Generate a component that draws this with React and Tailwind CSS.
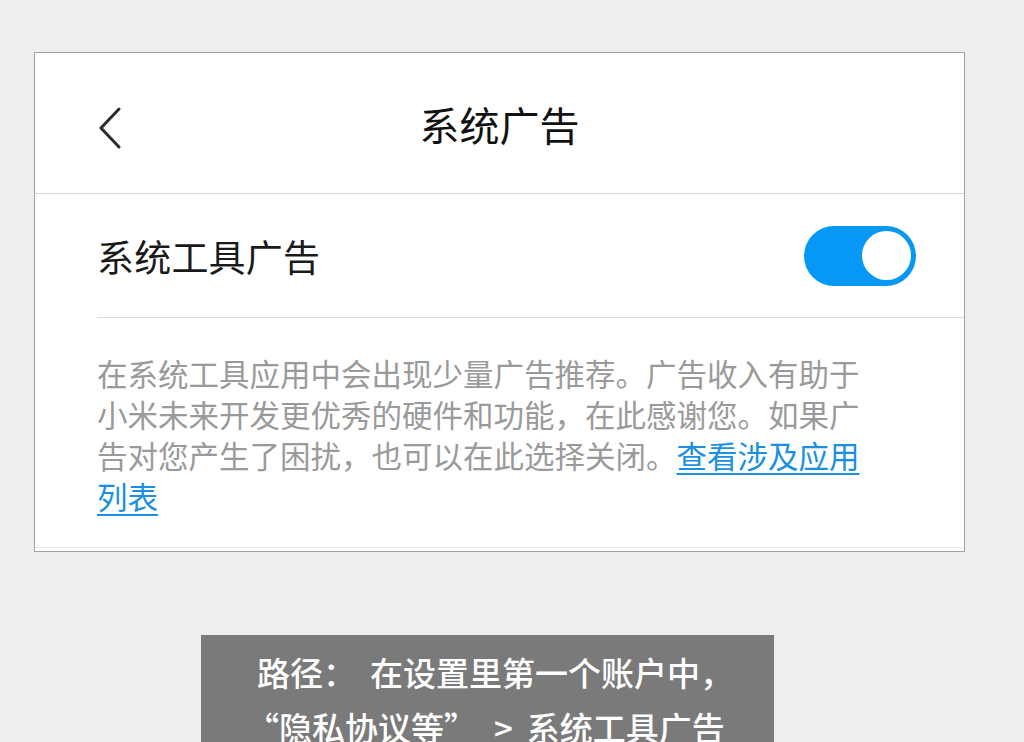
import React, { useState } from "react";

const font = { fontFamily: '"Noto Sans CJK SC", "Noto Sans", sans-serif' };

const App = () => {
  const [on, setOn] = useState(true);

  return (
    <div className="w-[1024px] h-[742px] overflow-hidden bg-[#eeeeee]" style={font}>
      <div className="pt-[52px] pl-[34px]">
        <div className="w-[931px] bg-white border border-[#a3a3a3]">
          {/* header */}
          <div className="relative h-[141px] flex items-center justify-center border-b border-[#d4d4d4]">
            <button className="absolute left-[62px] top-[54px] w-[28px] h-[42px] flex items-center">
              <svg width="26" height="42" viewBox="0 0 26 42" fill="none">
                <path d="M22 2 L4 21 L22 40" stroke="#2b2b2b" strokeWidth="3" strokeLinecap="round" strokeLinejoin="round" />
              </svg>
            </button>
            <h1 className="text-[40px] leading-none text-[#111] mt-[2px]">系统广告</h1>
          </div>

          {/* toggle row */}
          <div className="pl-[62px]">
            <div className="h-[124px] flex items-center justify-between pr-[48px] border-b border-[#dedede]">
              <span className="text-[37px] leading-none text-[#1a1a1a] tracking-[0.2px] mt-[2px]">系统工具广告</span>
              <button
                onClick={() => setOn(!on)}
                className={`w-[112px] h-[60px] rounded-full flex items-center px-[5px] ${on ? "bg-[#0797f7] justify-end" : "bg-[#d6d6d6] justify-start"}`}
              >
                <span className="w-[49px] h-[49px] rounded-full bg-white block" />
              </button>
            </div>

            {/* description */}
            <div className="w-[780px] pt-[35px] pb-[30px] text-[30.5px] leading-[41px] text-[#9a9a9a]">
              在系统工具应用中会出现少量广告推荐。广告收入有助于小米未来开发更优秀的硬件和功能，在此感谢您。如果广告对您产生了困扰，也可以在此选择关闭。
              <a href="#" className="text-[#1b8fe0] underline underline-offset-[5px] decoration-[2px]">查看涉及应用列表</a>
            </div>
          </div>
          <div className="h-[4px] border-t border-[#e6e6e6]" />
        </div>
      </div>

      {/* path note */}
      <div className="mt-[83px] ml-[201px] w-[573px] bg-[#7a7a7a] pt-[10px] pl-[56px] text-white text-[33px] leading-[55px] font-medium whitespace-nowrap">
        <div>
          路径：<span className="ml-[14px]">在设置里第一个账户中，</span>
        </div>
        <div className="-ml-[11px]">
          “隐私协议等”<span className="ml-[17px]">&gt;</span>
          <span className="ml-[14px]">系统工具广告</span>
        </div>
      </div>
    </div>
  );
};

export default App;
